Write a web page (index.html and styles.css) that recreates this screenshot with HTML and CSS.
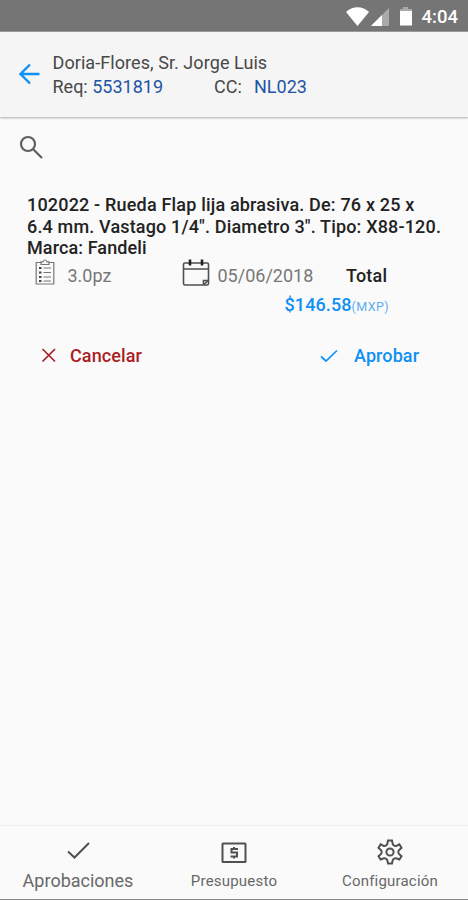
FILE: index.html
```html
<!DOCTYPE html>
<html lang="es">
<head>
<meta charset="utf-8">
<title>Aprobaciones</title>
<link rel="stylesheet" href="styles.css">
</head>
<body>
<div class="status">
  <svg class="signals" width="68" height="22" viewBox="0 0 68 22"><path d="M0 6C6-.5 17-.5 23 6L11.500 20Z" fill="#fff"/><path d="M43 2V20H25Z" fill="#aaa"/><path d="M36 9V20H25Z" fill="#fff"/><path d="M57 1h5v2h-5z" fill="#aaa"/><path d="M54 3h12v3H54z" fill="#aaa"/><path d="M54 5h12v14.500H54z" fill="#fff"/></svg>
  <span class="clock">4:04</span>
</div>
<header class="header">
  <svg class="back" width="22" height="22" viewBox="0 0 22 22"><path d="M20.500 11H2M11 1.500 1.500 11 11 20.500"/></svg>
  <div class="heading">
    <div class="person">Doria-Flores, Sr. Jorge Luis</div>
    <div class="refs"><span class="req">Req: <b>5531819</b></span><span class="cc">CC:</span><b class="ccnum">NL023</b></div>
  </div>
</header>
<main class="main">
  <svg class="search" width="24" height="24" viewBox="0 0 24 24"><circle cx="9" cy="9" r="7"/><path d="m14 14 9 9"/></svg>
  <article class="item">
    <h1 class="title"><span class="t1">102022 - Rueda Flap lija abrasiva. De: 76 x 25 x</span><span class="t2">6.4 mm. Vastago 1/4". Diametro 3". Tipo: X88-120.</span><span class="t3">Marca: Fandeli</span></h1>
    <div class="details">
      <svg class="clip" width="20" height="26" viewBox="0 0 20 26"><path d="M6 3.500H1.200V25H18.800V3.500H14M6 5.500V2.800H8Q10-.8 12 2.800H14V5.500Z"/><path class="rows" d="M8.500 9H16M8.500 13.500H16M8.500 18H16M8.500 22H16"/><path class="dots" d="M4 9H6.500M4 13.500H6.500M4 18H6.500M4 22H6.500"/></svg>
      <span class="qty">3.0pz</span>
      <svg class="cal" width="28" height="28" viewBox="0 0 28 28"><rect x="1.500" y="4" width="25" height="22" rx="1.500"/><path d="M1.500 10H26.500M21.500 26V21.500H26M22 25.500 26 21.500"/><path class="rings" d="M8 .5V6.500M20 .5V6.500"/></svg>
      <span class="date">05/06/2018</span>
      <span class="total">Total</span>
    </div>
    <div class="price"><b class="amount">$146.58</b><span class="cur">(MXP)</span></div>
    <div class="actions">
      <div class="cancel"><svg width="16" height="16" viewBox="0 0 16 16"><path d="m1.500 1 12.500 12.500M14 1 1.500 13.500"/></svg><span class="no">Cancelar</span></div>
      <div class="approve"><svg width="18" height="14" viewBox="0 0 18 14"><path d="m1 7.500 5 4.500L17 1.500"/></svg><span class="yes">Aprobar</span></div>
    </div>
  </article>
</main>
<nav class="tabs">
  <div class="tab"><svg width="28" height="28" viewBox="0 0 28 28"><path d="m4 13.500 6.500 6L25 5"/></svg><span class="tl active">Aprobaciones</span></div>
  <div class="tab"><svg width="28" height="28" viewBox="0 0 28 28"><rect x="2.500" y="5.500" width="23" height="18.500" rx=".5"/><path d="M18 11H11.500V14.500H17V18.500H10.500M14 9V11M14 18.500V20.500"/></svg><span class="tl pres">Presupuesto</span></div>
  <div class="tab"><svg width="28" height="28" viewBox="0 0 28 28"><path d="M12 2.500H16L16.800 6.300Q18.500 8.500 20.800 7.700L23.400 6.400 25.500 9.800 22.700 12.500Q21.800 14.200 22.700 15.700L25.500 18.200 23.400 21.600 20.800 20.500Q18.500 19.700 16.800 21.900L16 25.500H12L11.200 21.900Q9.500 19.700 7.200 20.500L4.600 21.600 2.500 18.200 5.300 15.700Q6.200 14.200 5.300 12.500L2.500 9.800 4.600 6.400 7.200 7.700Q9.500 8.500 11.200 6.300Z"/><circle cx="14" cy="14" r="3.600"/></svg><span class="tl conf">Configuración</span></div>
</nav>
</body>
</html>
```
FILE: styles.css
```css
* { box-sizing: border-box; }
body { margin: 0; height: 900px; display: flex; flex-direction: column; background: #fafafa; font-family: Roboto, sans-serif; color: #484848; overflow: hidden; border-bottom: 1px solid #888; }
svg { flex: none; fill: none; stroke: #505050; stroke-width: 2; }
span, b, .person { white-space: nowrap; }
.status { height: 32px; background: #757575; border-bottom: 1px solid #999; display: flex; padding: 6px 0 0 346px; flex: none; }
.signals { stroke: none; }
.clock { color: #fff; font-size: 18.500px; font-weight: 500; line-height: 22px; margin-left: 7.500px; }
.header { height: 85px; flex: none; background: #f5f5f5; box-shadow: 0 1px 2px #aaa; display: flex; padding: 18px 0 0 18.500px; }
.back { margin-top: 13px; stroke: #1090f5; stroke-width: 2.400; }
.heading { margin-left: 12px; font-size: 18px; line-height: 24px; padding-top: 1px; }
.person { letter-spacing: .07px; }
.refs { display: flex; }
.refs b { font-weight: 400; color: #1d54a5; }
.req { width: 161.500px; }
.cc { width: 40px; }
.main { flex: 1; padding: 18px 26px 0 27px; }
.search { display: block; margin-left: -8px; stroke: #606060; stroke-width: 2.200; }
.title { margin: 35px 0 0; font-size: 18px; line-height: 21.500px; font-weight: 500; color: #222; }
.title span { display: block; }
.t1 { letter-spacing: .18px; }
.t2 { letter-spacing: .16px; }
.t3 { letter-spacing: .1px; }
.details { display: flex; height: 30px; font-size: 18px; line-height: 33px; color: #777; }
.clip { margin: 0 0 0 8px; stroke: #777; stroke-width: 1.200; }
.clip .dots { stroke: #444; stroke-width: 2; }
.qty { width: 114.500px; margin-left: 12.500px; }
.cal { stroke-width: 1.600; }
.cal .rings { stroke: #222; stroke-width: 2.600; }
.date { width: 128.500px; margin-left: 7.500px; }
.total { color: #222; font-weight: 500; letter-spacing: .2px; }
.price { margin: 4px 0 0 257.500px; line-height: 24px; color: #1090f5; display: flex; }
.amount { font-size: 18px; font-weight: 500; letter-spacing: .1px; }
.cur { font-size: 12.500px; line-height: 27px; color: #5badf0; letter-spacing: .4px; }
.actions { display: flex; margin-top: 23px; font-size: 18px; font-weight: 500; line-height: 26px; }
.cancel, .approve { display: flex; align-items: center; }
.cancel { color: #aa1e26; width: 279px; padding-left: 14px; }
.cancel svg { stroke: #aa1e26; stroke-width: 1.700; margin-right: 13px; }
.no { letter-spacing: .1px; }
.approve { color: #1090f5; padding-left: 14px; }
.approve svg { stroke: #1090f5; stroke-width: 1.700; margin-right: 16px; }
.yes { letter-spacing: .1px; }
.tabs { height: 74px; flex: none; border-top: 1px solid #eee; display: grid; grid-template-columns: repeat(3, 1fr); }
.tab { display: flex; flex-direction: column; align-items: center; padding-top: 12px; color: #686868; }
.tl { font-size: 15px; line-height: 30px; letter-spacing: .2px; }
.tab .active { font-size: 18px; letter-spacing: 0; }
```
